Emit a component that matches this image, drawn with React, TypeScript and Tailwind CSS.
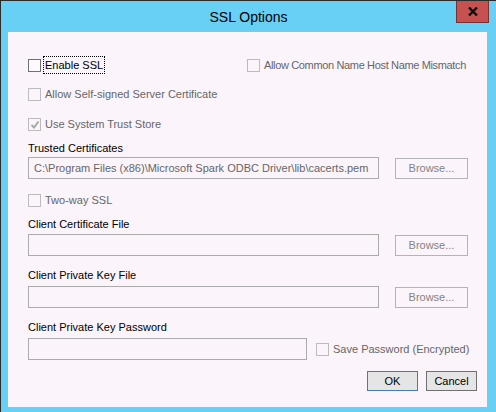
import { ReactNode } from 'react';

const font = { fontFamily: '"Segoe UI", "Liberation Sans", Arial, sans-serif' };

function CheckBox({ checked = false, enabled = false }: { checked?: boolean; enabled?: boolean }) {
  return (
    <span
      className={`relative inline-block w-[13px] h-[13px] border shrink-0 ${
        enabled ? 'border-[#707070] bg-[#fdfafd]' : 'border-[#bcbcbc] bg-[#fbf4fb]'
      }`}
    >
      {checked && (
        <svg className="absolute left-[1px] top-[1px]" width="10" height="10" viewBox="0 0 10 10">
          <path d="M1.5 5 L4 7.5 L8.5 1.5" fill="none" stroke="#a8a8a8" strokeWidth="2" />
        </svg>
      )}
    </span>
  );
}

function Check({ label, checked, enabled, focus, tight }: { label: string; checked?: boolean; enabled?: boolean; focus?: boolean; tight?: boolean }) {
  return (
    <div className="flex items-center h-4 whitespace-nowrap">
      <CheckBox checked={checked} enabled={enabled} />
      <span
        className={`ml-[3px] px-px leading-[16px] ${enabled ? 'text-black' : 'text-[#666666]'} ${
          focus ? 'outline-1 outline-dotted outline-black' : ''
        } ${tight ? 'tracking-[-0.35px]' : ''}`}
      >
        {label}
      </span>
    </div>
  );
}

function Label({ children, className = '' }: { children: ReactNode; className?: string }) {
  return <div className={`h-4 leading-[16px] text-black ${className}`}>{children}</div>;
}

function Field({ value = '', width = 'w-[351px]' }: { value?: string; width?: string }) {
  return (
    <div className={`${width} h-[22px] border border-[#ababab] bg-[#fbf4fb] flex items-center px-[5px] text-[#666666] whitespace-nowrap overflow-hidden`}>
      {value}
    </div>
  );
}

function Browse() {
  return (
    <div className="w-[73px] h-[21px] border border-[#b4b4b4] flex items-center justify-center text-[#838383]">
      Browse...
    </div>
  );
}

export default function App() {
  return (
    <div className="w-[496px] h-[412px] bg-[#68cff5] border-l border-t border-[#2b2b2b] flex flex-col text-[11px]" style={font}>
      <div className="h-[31px] relative flex items-center justify-center">
        <span className="text-[14px] text-black mt-[2px]">SSL Options</span>
        <div className="absolute left-[455px] top-0 w-[33px] h-[22px] bg-[#c75050] border border-t-0 border-[#7a3030] flex items-center justify-center">
          <svg width="10" height="9" viewBox="0 0 10 9">
            <path d="M1 0.5 L9 8.5 M9 0.5 L1 8.5" stroke="#111" strokeWidth="2.4" />
          </svg>
        </div>
      </div>
      <div className="ml-[7px] w-[479px] h-[375px] bg-[#fbf4fb] pl-5 pt-[25px] flex flex-col">
        <div className="flex">
          <div className="w-[219px]">
            <Check label="Enable SSL" enabled focus />
          </div>
          <Check label="Allow Common Name Host Name Mismatch" tight />
        </div>
        <div className="mt-[13px]">
          <Check label="Allow Self-signed Server Certificate" />
        </div>
        <div className="mt-[14px]">
          <Check label="Use System Trust Store" checked />
        </div>
        <Label className="mt-2">Trusted Certificates</Label>
        <div className="mt-px flex items-center gap-4">
          <Field value="C:\Program Files (x86)\Microsoft Spark ODBC Driver\lib\cacerts.pem" />
          <Browse />
        </div>
        <div className="mt-[13px]">
          <Check label="Two-way SSL" />
        </div>
        <Label className="mt-2">Client Certificate File</Label>
        <div className="mt-[2px] flex items-center gap-4">
          <Field />
          <Browse />
        </div>
        <Label className="mt-[11px]">Client Private Key File</Label>
        <div className="mt-[3px] flex items-center gap-4">
          <Field />
          <Browse />
        </div>
        <Label className="mt-[11px]">Client Private Key Password</Label>
        <div className="mt-[3px] flex items-center">
          <Field width="w-[279px]" />
          <div className="ml-[9px]">
            <Check label="Save Password (Encrypted)" />
          </div>
        </div>
        <div className="mt-[11px] flex justify-end gap-2 pr-[10px]">
          <div className="w-[51px] h-[20px] border border-[#3c7fb1] bg-[#e5e5e5] flex items-center justify-center text-black">OK</div>
          <div className="w-[51px] h-[20px] border border-[#707070] bg-[#e5e5e5] flex items-center justify-center text-black">Cancel</div>
        </div>
      </div>
    </div>
  );
}
